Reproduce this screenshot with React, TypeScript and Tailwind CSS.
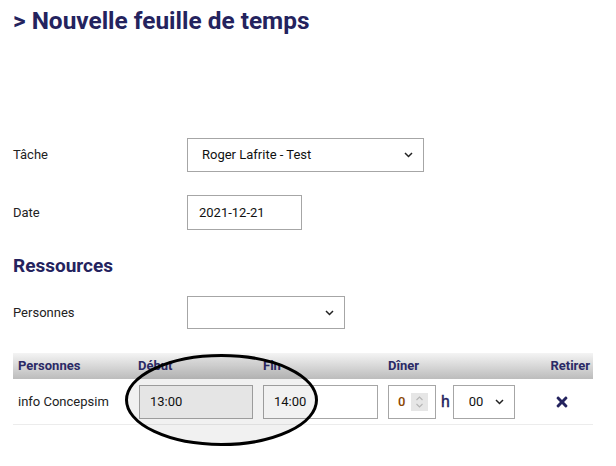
import { FaTimes } from 'react-icons/fa';

function Chevron() {
  return (
    <svg width="9" height="6" viewBox="0 0 9 6" className="pointer-events-none absolute right-[10px] top-1/2 -translate-y-1/2">
      <path d="M1 1l3.5 3.5L8 1" fill="none" stroke="#222" strokeWidth="1.5" />
    </svg>
  );
}

function Select({ value, className }: { value: string; className: string }) {
  return (
    <div className={`relative flex items-center border border-[#a6a6a6] bg-white ${className}`}>
      <span className="text-[13px] text-[#111]">{value}</span>
      <Chevron />
    </div>
  );
}

export default function App() {
  return (
    <div className="min-h-[466px] bg-white pl-[13px] pr-[23px] pt-[7px] font-['Roboto',sans-serif] text-[#222]">
      <h1 className="text-[24.4px] font-bold leading-[28px] text-[#24235e]">&gt; Nouvelle feuille de temps</h1>

      <div className="mt-[103px] flex items-center">
        <div className="w-[174px] text-[13px]">Tâche</div>
        <Select value="Roger Lafrite - Test" className="h-[34px] w-[237px] pl-[14px]" />
      </div>

      <div className="mt-[23px] flex items-center">
        <div className="w-[174px] text-[13px]">Date</div>
        <div className="flex h-[35px] w-[115px] items-center border border-[#a6a6a6] pl-[11px] text-[13px] text-[#111]">2021-12-21</div>
      </div>

      <h2 className="mt-[24px] text-[19px] font-bold leading-[24px] text-[#24235e]">Ressources</h2>

      <div className="mt-[18px] flex items-center">
        <div className="w-[174px] text-[13px]">Personnes</div>
        <Select value="" className="h-[33px] w-[158px]" />
      </div>

      <div className="relative mt-[24px]">
        <div className="flex h-[26px] items-center bg-gradient-to-b from-[#f4f4f4] to-[#bcbcbc] text-[13px] font-bold text-[#2b2a66]">
          <div className="w-[120px] pl-[5px]">Personnes</div>
          <div className="w-[125px] pl-[5px]">Début</div>
          <div className="w-[125px] pl-[5px]">Fin</div>
          <div className="flex-1 pl-[5px]">Dîner</div>
          <div className="pr-[3px]">Retirer</div>
        </div>
        <div className="flex h-[46px] items-center border-b border-[#ececec] text-[13px]">
          <div className="w-[120px] pl-[5px]">info Concepsim</div>
          <div className="w-[125px] pl-[6px]">
            <div className="flex h-[34px] w-[114px] items-center border border-[#a6a6a6] bg-[#f3f3f3] pl-[10px] text-[#111]">13:00</div>
          </div>
          <div className="w-[125px] pl-[5px]">
            <div className="flex h-[34px] w-[115px] items-center border border-[#a6a6a6] bg-white pl-[10px] text-[#111]">14:00</div>
          </div>
          <div className="flex flex-1 items-center pl-[5px]">
            <div className="flex h-[34px] w-[48px] items-center border border-[#a6a6a6] pl-[9px]">
              <span className="font-medium text-[#8a4600]">0</span>
              <div className="ml-[6px] flex h-[18px] w-[17px] flex-col items-center justify-center bg-[#e6e6e6]">
                <svg width="9" height="14" viewBox="0 0 9 14">
                  <path d="M1.5 5l3-3 3 3M1.5 9l3 3 3-3" fill="none" stroke="#b5b5b5" strokeWidth="1.1" />
                </svg>
              </div>
            </div>
            <span className="ml-[5px] text-[16px] text-[#24235e] [-webkit-text-stroke:0.4px_#24235e]">h</span>
            <Select value="00" className="ml-[3px] h-[34px] w-[62px] pl-[15px]" />
          </div>
          <div className="w-[63px] pl-[24px]">
            <FaTimes className="h-[16px] w-[16px] text-[#24235e]" />
          </div>
        </div>

        <svg className="pointer-events-none absolute left-[110px] top-0 overflow-visible" width="200" height="96">
          <ellipse cx="98.5" cy="47" rx="95" ry="44.5" fill="rgba(0,0,0,0.055)" stroke="#000" strokeWidth="3" />
        </svg>
      </div>
    </div>
  );
}
